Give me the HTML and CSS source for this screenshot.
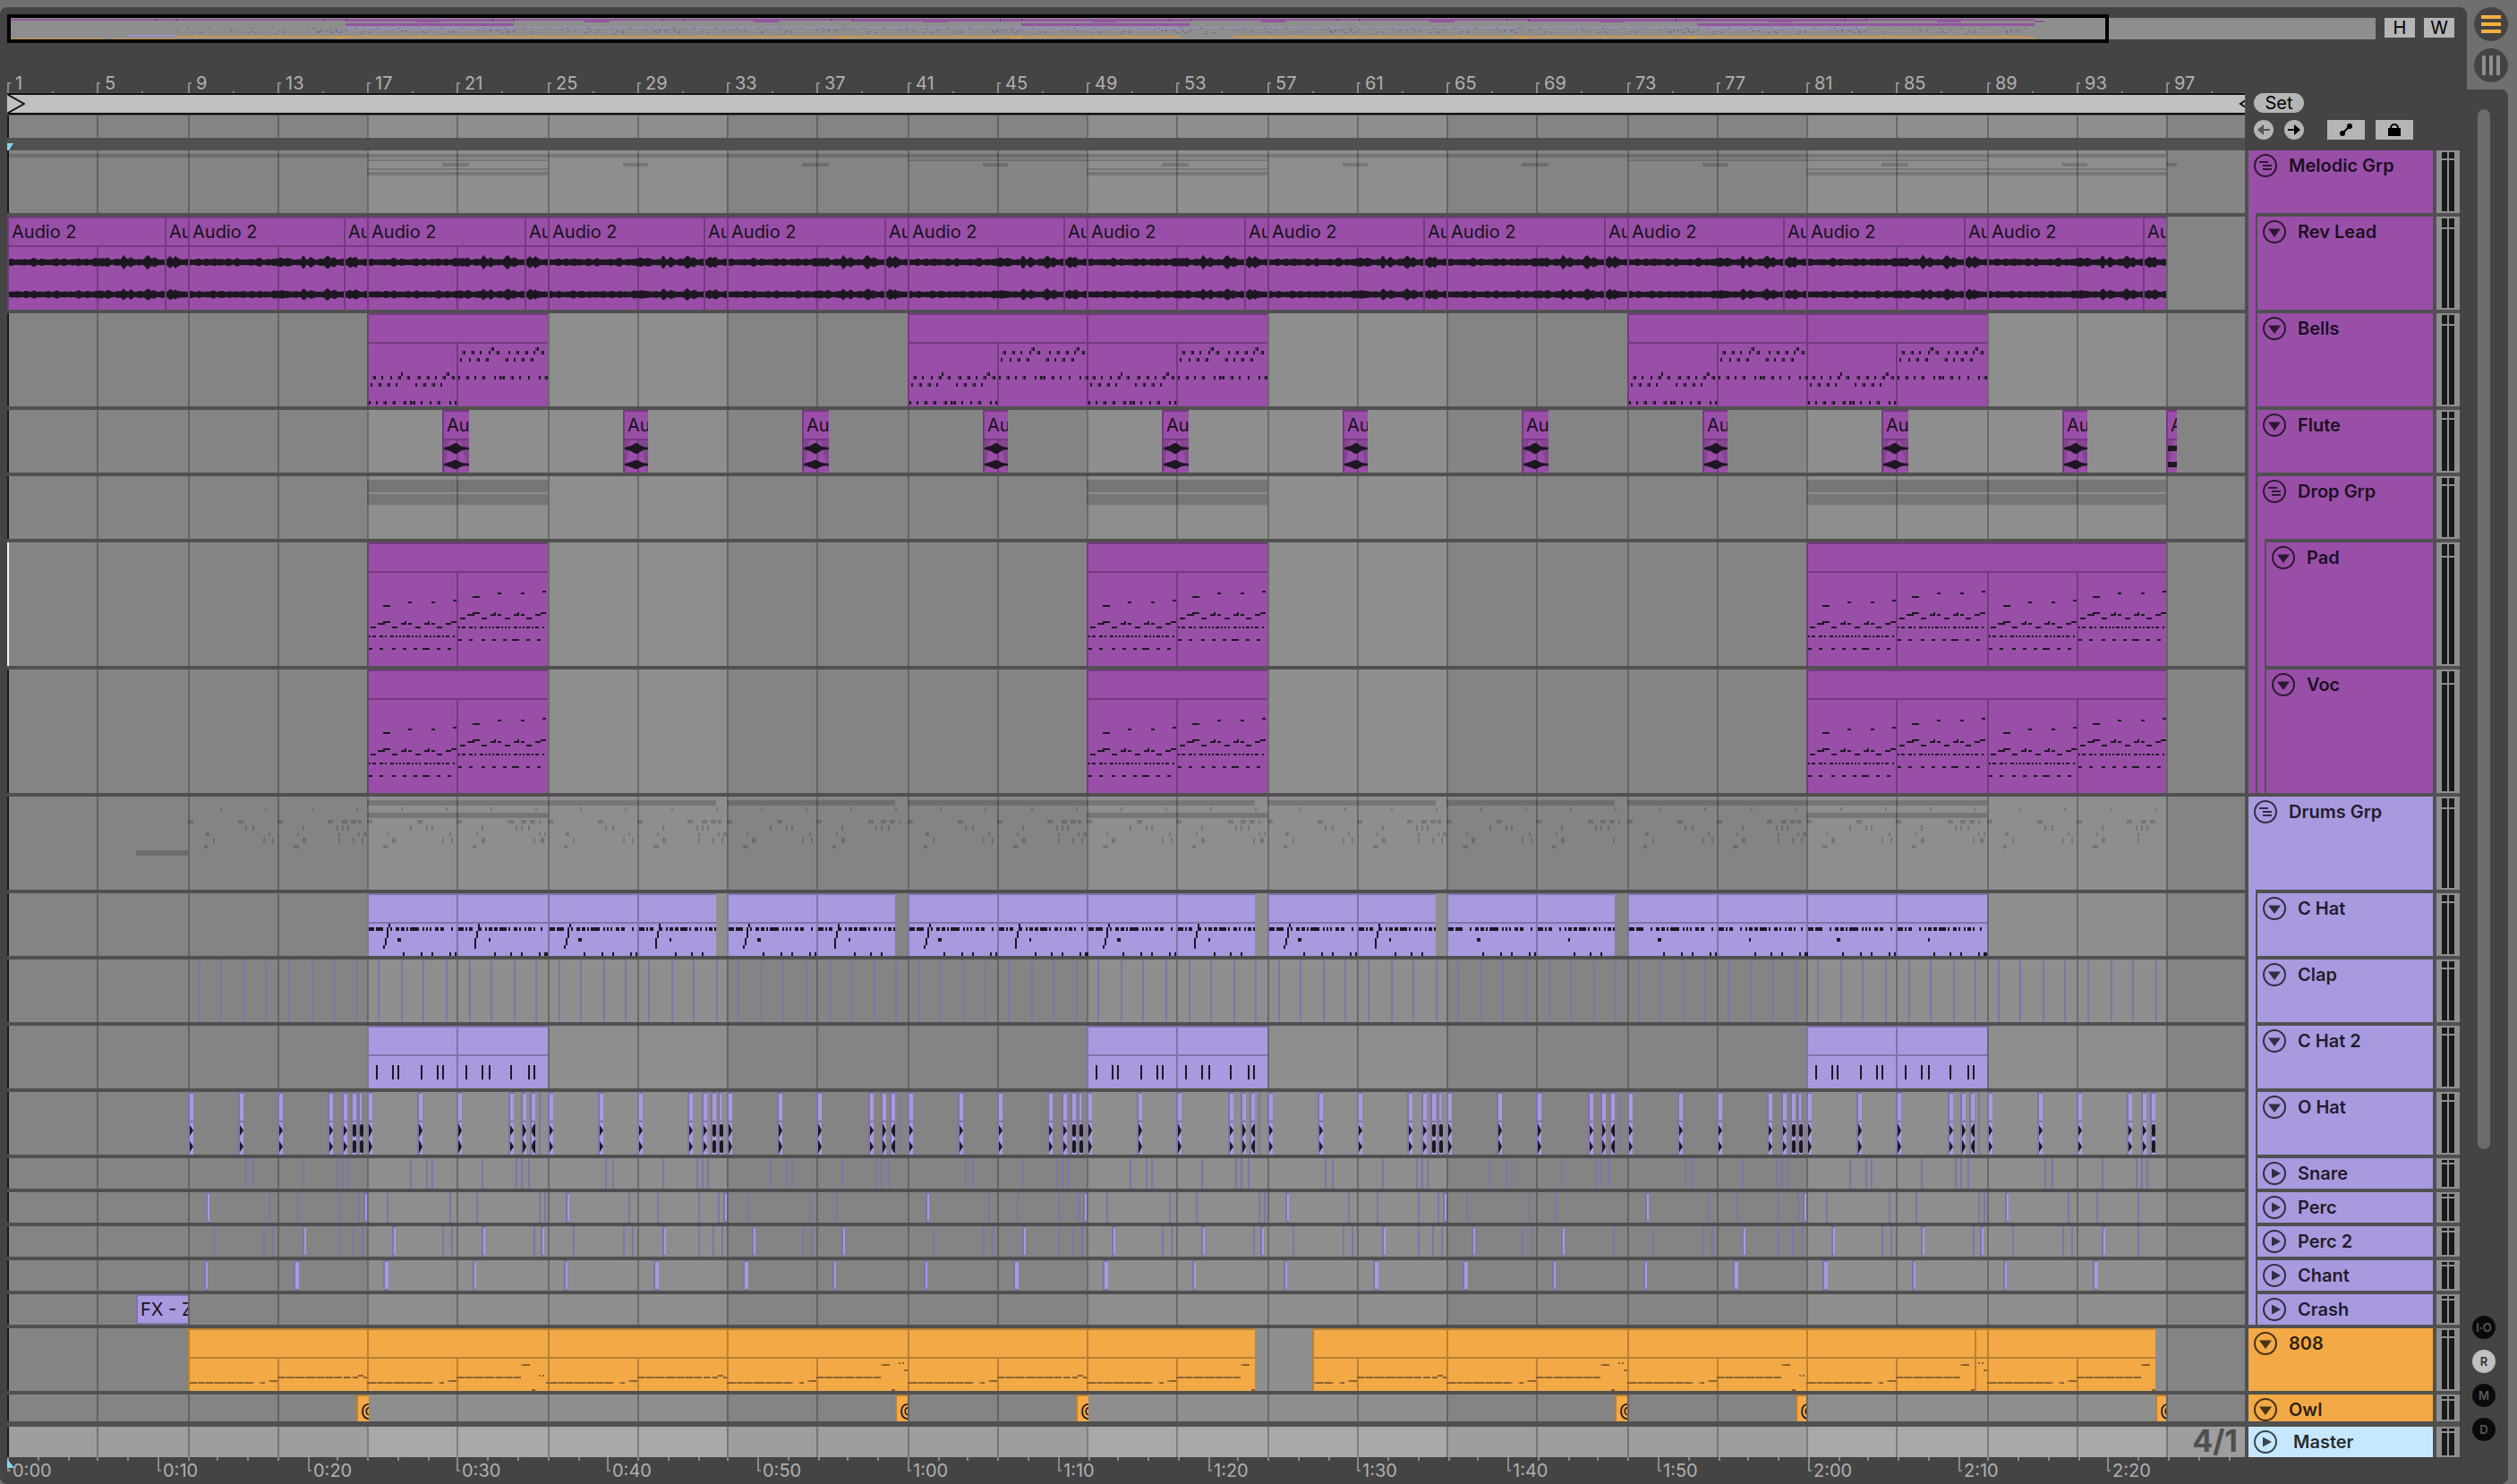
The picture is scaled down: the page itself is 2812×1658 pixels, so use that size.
FILE: index.html
```html
<!DOCTYPE html>
<html lang="en">

<head>
    <meta charset="utf-8">
    <title>Arrangement</title>
    <link rel="stylesheet" href="styles.css">
</head>

<body>
    <svg class="symbols" aria-hidden="true">
        <symbol id="icon-open" viewBox="0 0 26 26">
            <circle cx="13" cy="13" r="12" fill="none" stroke="currentColor" stroke-width="2" />
            <path d="M6 9.500H20L13 19z" fill="currentColor" />
        </symbol>
        <symbol id="icon-closed" viewBox="0 0 26 26">
            <circle cx="13" cy="13" r="12" fill="none" stroke="currentColor" stroke-width="2" />
            <path d="M10 7.500L20 13L10 18.500z" fill="currentColor" />
        </symbol>
        <symbol id="icon-group" viewBox="0 0 26 26">
            <circle cx="13" cy="13" r="12" fill="none" stroke="currentColor" stroke-width="2" />
            <path d="M6 9H16M10 13H20M10 17H20" fill="none" stroke="currentColor" stroke-width="2" />
        </symbol>
    </svg>

    <div class="workspace">
        <main class="panel">
            <div class="overview-bar">
                <div class="overview" data-overview></div>
                <button class="small-button">H</button>
                <button class="small-button">W</button>
            </div>

            <div class="columns top">
                <div>
                    <div class="bar-ruler" data-barruler></div>
                    <div class="loop-bar">
                        <svg width="20" height="20" viewBox="0 0 20 20"><path d="M1 0L19 10L1 20" fill="none" stroke="#111" stroke-width="2" /></svg>
                        <svg width="7" height="8" viewBox="0 0 7 8"><path d="M8 0L2 4L8 8" fill="none" stroke="#111" stroke-width="2" /></svg>
                    </div>
                    <div class="scrub" data-lane="scrub"></div>
                    <div class="locators">
                        <svg width="8" height="8" viewBox="0 0 8 8"><path d="M0 0H7L2 8H0z" fill="#7fd9f5" /></svg>
                    </div>
                </div>
                <div class="controls">
                    <button class="set-button">Set</button>
                    <div class="control-row">
                        <button class="round-button off" aria-label="Previous locator">
                            <svg width="22" height="22" viewBox="0 0 22 22"><path d="M11 5L4 11L11 17z" fill="currentColor" /><path d="M10 11H18" stroke="currentColor" stroke-width="2" /></svg>
                        </button>
                        <button class="round-button" aria-label="Next locator">
                            <svg width="22" height="22" viewBox="0 0 22 22"><path d="M11 5L18 11L11 17z" fill="currentColor" /><path d="M4 11H12" stroke="currentColor" stroke-width="2" /></svg>
                        </button>
                        <button class="wide-button" aria-label="Automation mode">
                            <svg width="14" height="14" viewBox="0 0 14 14"><path d="M3 11L5 9L9 5L11 3" stroke="#000" stroke-width="2" /><circle cx="3" cy="11" r="3" /><circle cx="11" cy="3" r="3" /></svg>
                        </button>
                        <button class="wide-button" aria-label="Lock envelopes">
                            <svg width="14" height="14" viewBox="0 0 14 14"><path d="M0 5H14V14H0z" /><path d="M3 6V5A4 4 0 0 1 11 5V6" fill="none" stroke="#000" stroke-width="2" /></svg>
                        </button>
                    </div>
                </div>
            </div>

            <div class="columns tracks">
                <div class="stack lanes">
                    <div class="lane m" data-lane="melodic"></div>
                    <div class="lane l" data-lane="rev"></div>
                    <div class="lane l" data-lane="bells"></div>
                    <div class="lane m" data-lane="flute"></div>
                    <div class="lane m" data-lane="drop"></div>
                    <div class="lane xl selected" data-lane="pad"></div>
                    <div class="lane xl" data-lane="voc"></div>
                    <div class="lane l" data-lane="drums"></div>
                    <div class="lane m" data-lane="chat"></div>
                    <div class="lane m" data-lane="clap"></div>
                    <div class="lane m" data-lane="chat2"></div>
                    <div class="lane m" data-lane="ohat"></div>
                    <div class="lane s" data-lane="snare"></div>
                    <div class="lane s" data-lane="perc"></div>
                    <div class="lane s" data-lane="perc2"></div>
                    <div class="lane s" data-lane="chant"></div>
                    <div class="lane s" data-lane="crash"></div>
                    <div class="lane m" data-lane="bass"></div>
                    <div class="lane xs" data-lane="owl"></div>
                    <div class="lane s master-lane" data-lane="master"><span class="grid-size">4/1</span></div>
                </div>

                <div class="stack headers">
                    <div class="group purple">
                        <div class="head m"><button class="fold" aria-label="Fold"><svg><use href="#icon-group" /></svg></button><span>Melodic Grp</span></div>
                        <div class="children">
                            <div class="head l purple"><button class="fold" aria-label="Fold"><svg><use href="#icon-open" /></svg></button><span>Rev Lead</span></div>
                            <div class="head l purple"><button class="fold" aria-label="Fold"><svg><use href="#icon-open" /></svg></button><span>Bells</span></div>
                            <div class="head m purple"><button class="fold" aria-label="Fold"><svg><use href="#icon-open" /></svg></button><span>Flute</span></div>
                            <div class="group purple">
                                <div class="head m"><button class="fold" aria-label="Fold"><svg><use href="#icon-group" /></svg></button><span>Drop Grp</span></div>
                                <div class="children">
                                    <div class="head xl purple"><button class="fold" aria-label="Fold"><svg><use href="#icon-open" /></svg></button><span>Pad</span></div>
                                    <div class="head xl purple"><button class="fold" aria-label="Fold"><svg><use href="#icon-open" /></svg></button><span>Voc</span></div>
                                </div>
                            </div>
                        </div>
                    </div>
                    <div class="group lavender">
                        <div class="head l"><button class="fold" aria-label="Fold"><svg><use href="#icon-group" /></svg></button><span>Drums Grp</span></div>
                        <div class="children">
                            <div class="head m lavender"><button class="fold" aria-label="Fold"><svg><use href="#icon-open" /></svg></button><span>C Hat</span></div>
                            <div class="head m lavender"><button class="fold" aria-label="Fold"><svg><use href="#icon-open" /></svg></button><span>Clap</span></div>
                            <div class="head m lavender"><button class="fold" aria-label="Fold"><svg><use href="#icon-open" /></svg></button><span>C Hat 2</span></div>
                            <div class="head m lavender"><button class="fold" aria-label="Fold"><svg><use href="#icon-open" /></svg></button><span>O Hat</span></div>
                            <div class="head s lavender"><button class="fold" aria-label="Unfold"><svg><use href="#icon-closed" /></svg></button><span>Snare</span></div>
                            <div class="head s lavender"><button class="fold" aria-label="Unfold"><svg><use href="#icon-closed" /></svg></button><span>Perc</span></div>
                            <div class="head s lavender"><button class="fold" aria-label="Unfold"><svg><use href="#icon-closed" /></svg></button><span>Perc 2</span></div>
                            <div class="head s lavender"><button class="fold" aria-label="Unfold"><svg><use href="#icon-closed" /></svg></button><span>Chant</span></div>
                            <div class="head s lavender"><button class="fold" aria-label="Unfold"><svg><use href="#icon-closed" /></svg></button><span>Crash</span></div>
                        </div>
                    </div>
                    <div class="head m orange"><button class="fold" aria-label="Fold"><svg><use href="#icon-open" /></svg></button><span>808</span></div>
                    <div class="head xs orange"><button class="fold" aria-label="Fold"><svg><use href="#icon-open" /></svg></button><span>Owl</span></div>
                    <div class="head s master"><button class="fold" aria-label="Unfold"><svg><use href="#icon-closed" /></svg></button><span>Master</span></div>
                </div>

                <div class="stack meters" data-meters></div>
            </div>

            <div class="columns">
                <div class="time-ruler" data-timeruler></div>
            </div>
        </main>

        <aside class="rail">
            <div class="modes">
                <button class="mode" aria-label="Arrangement">
                    <svg width="38" height="38" viewBox="0 0 38 38"><path d="M8 11H30M8 19H30M8 27H30" stroke="#f5b13d" stroke-width="4" /></svg>
                </button>
                <button class="mode" aria-label="Session">
                    <svg width="38" height="38" viewBox="0 0 38 38"><path d="M11 8V30M19 8V30M27 8V30" stroke="#8f8f8f" stroke-width="4" /></svg>
                </button>
            </div>
            <div class="scroller">
                <div class="thumb"></div>
                <div class="toggles">
                    <button class="toggle">I·O</button>
                    <button class="toggle on">R</button>
                    <button class="toggle">M</button>
                    <button class="toggle">D</button>
                </div>
            </div>
        </aside>
    </div>

    <script src="script.js"></script>
</body>

</html>
```

FILE: styles.css
```css
* {
    box-sizing: border-box;
}

body {
    margin: 0;
    min-height: 100vh;
    display: flex;
    background: #6f6f6f;
    font-family: Inter, "Liberation Sans", sans-serif;
    font-size: 20px;
    line-height: 20px;
}

button {
    margin: 0;
    padding: 0;
    border: 0;
    font: inherit;
    color: #000;
    background: #b5b5b5;
}

svg {
    display: block;
}

.symbols {
    display: none;
}

.workspace {
    flex: 1;
    display: flex;
    padding-top: 8px;
}

.panel {
    flex: 1;
    min-width: 0;
    padding: 8px 0 0 8px;
    background: #444;
    border-radius: 8px 8px 0 8px;
}

/* overview */

.overview-bar {
    display: flex;
    align-items: center;
    gap: 10px;
    height: 32px;
    padding-right: 14px;
}

.overview {
    flex: 1;
    min-width: 0;
    height: 32px;
}

.small-button {
    width: 34px;
    height: 22px;
    margin-bottom: 2px;
}

/* shared column layout */

.columns {
    display: grid;
    grid-template-columns: minmax(0, 1fr) 206px 26px;
    column-gap: 4px;
    margin-right: 8px;
}

.bar-ruler,
.time-ruler {
    position: relative;
    color: #b0b0b0;
}

.bar-ruler {
    height: 56px;
}

.time-ruler {
    height: 30px;
}

.bar-number,
.time-number {
    position: absolute;
}

.bar-number {
    bottom: 1px;
    padding-left: 9px;
}

.time-number {
    top: 5px;
    padding-left: 6px;
}

.loop-bar {
    display: flex;
    justify-content: space-between;
    align-items: center;
    height: 24px;
    border-top: 2px solid #111;
    border-bottom: 2px solid #111;
    background: #c0c0c0;
    outline: 1px solid #505050;
}

.scrub {
    height: 26px;
}

.locators {
    height: 14px;
    padding-top: 6px;
    background: #505050;
}

.controls {
    display: flex;
    flex-direction: column;
    align-items: flex-start;
    gap: 8px;
    padding: 56px 0 0 6px;
}

.set-button {
    width: 56px;
    height: 22px;
    border-radius: 11px;
}

.control-row {
    display: flex;
    gap: 12px;
}

.round-button {
    width: 22px;
    height: 22px;
    border-radius: 50%;
}

.round-button.off {
    color: #555;
}

.wide-button {
    display: flex;
    justify-content: center;
    align-items: center;
    width: 42px;
    height: 22px;
}

.round-button + .wide-button {
    margin-left: 14px;
}

/* tracks */

.tracks {
    background: #505050;
}

.stack {
    display: flex;
    flex-direction: column;
    gap: 4px;
}

.s {
    height: 34px;
}

.xs {
    height: 30px;
    margin-bottom: 2px;
}

.m {
    height: 70px;
}

.l {
    height: 104px;
}

.xl {
    height: 138px;
}

.lane {
    position: relative;
    overflow: hidden;
}

.clip-name {
    position: absolute;
    top: 2px;
    height: 30px;
    padding-left: 5px;
    overflow: hidden;
    line-height: 30px;
    white-space: nowrap;
    color: #17121b;
}

.grid-size {
    position: absolute;
    right: 8px;
    top: 0;
    font-size: 34px;
    font-weight: 700;
    line-height: 32px;
    color: #4f4f4f;
}

.purple {
    background: #994fa8;
}

.lavender {
    background: #a999df;
}

.orange {
    background: #f2a946;
}

.children {
    display: flex;
    flex-direction: column;
    gap: 4px;
    margin-left: 8px;
    padding: 4px 0 0 2px;
    background: #505050;
}

.head {
    display: flex;
    align-items: flex-start;
    gap: 13px;
    padding: 4px 0 0 6px;
    font-weight: 600;
    line-height: 26px;
    color: rgba(0, 0, 0, 0.82);
    overflow: hidden;
}

.head.master {
    gap: 18px;
    background: #c6e8ff;
}

.fold {
    width: 26px;
    height: 26px;
    background: none;
    color: rgba(0, 0, 0, 0.7);
}

.fold svg {
    width: 26px;
    height: 26px;
}

.meter {
    display: grid;
    grid-template-columns: 6px 6px;
    grid-template-rows: 10% 1fr;
    gap: 2px;
    padding: 2px 6px;
    background: #8e8e8e;
}

.meter i {
    background: #191919;
}

/* right rail */

.rail {
    display: flex;
    flex-direction: column;
    width: 56px;
}

.modes {
    display: flex;
    flex-direction: column;
    gap: 8px;
    height: 92px;
    padding-left: 8px;
}

.mode {
    width: 38px;
    height: 38px;
    border-radius: 50%;
    background: #444;
}

.scroller {
    flex: 1;
    display: flex;
    flex-direction: column;
    width: 46px;
    padding: 22px 14px 48px 12px;
    background: #444;
    border-radius: 0 8px 8px 0;
}

.thumb {
    flex: 1;
    width: 14px;
    border-radius: 7px;
    background: #6b6b6b;
}

.toggles {
    display: flex;
    flex-direction: column;
    align-items: center;
    gap: 12px;
    width: 14px;
    margin-top: 186px;
}

.toggle {
    width: 26px;
    height: 26px;
    border-radius: 50%;
    background: #0a0a0a;
    color: #5a5a5a;
    font-size: 13px;
    font-weight: 600;
}

.toggle.on {
    background: #c0c0c0;
    color: #333;
}
```

FILE: script.js
```js
const BARS = 99.5; // bars visible in the window
const UNIT = 25.125; // clip data below is written in units of 1/25.125 bar
const NOTE = "#1d1722";

const colors = {
    purple: ["#994fa8", "#743a80"],
    lavender: ["#a999df", "#8173a8"],
    orange: ["#f2a946", "#b78035"]
};

let width = document.querySelector(".lanes").clientWidth;
const snap = v => Math.round(v / 2) * 2;
const barX = bar => snap((bar - 1) * width / BARS);
const unitX = (bar, u) => snap(((bar - 1) + u / UNIT) * width / BARS);
const rect = (x, y, w, h) => `M${x} ${y}h${w}v${h}h${-w}z`;
const path = (d, fill) => `<path d="${d}" fill="${fill}"/>`;

function svg(w, h, content) {
    return `<svg width="${w}" height="${h}" shape-rendering="crispEdges">${content}</svg>`;
}

// every eighth bar a block starts, blocks alternate between A and B
const blocks = [];
for (let bar = 9, i = 0; bar < 97; bar += 8, i++) {
    blocks.push({ bar: bar, odd: i % 2 == 1 });
}

function hits(a, b, shorter) {
    let list = [];
    blocks.forEach(block => {
        let pattern = block.odd ? b : a;
        if (block.odd && shorter && shorter[block.bar]) pattern = pattern.slice(0, shorter[block.bar]);
        pattern.forEach(p => {
            if (block.bar == 89 && p[0] > 182) return;
            list.push([block.bar, p[0], p[1] || 2, p[2]]);
        });
    });
    return list;
}

const ohat = hits(
    [[0, 6], [56, 6], [100, 6], [156, 6], [172, 6], [182, 6, "block"], [190, 4, "block"]],
    [[0, 6, "big"], [56, 6, "big"], [100, 6, "big"], [158, 6], [172, 6, "big"], [182, 6, "left"], [192, 2, "none"]]);
const snare = hits(
    [[64], [72], [128], [166], [172], [178]],
    [[48], [66], [72], [128], [166], [172], [180]]);
const perc = hits(
    [[20, 4], [90], [122], [168], [190], [196, 4]],
    [[22], [92], [122], [192], [198]], { 33: 3, 65: 3 });
const perc2 = hits(
    [[28], [84], [94], [128, 4], [168], [184], [194]],
    [[28, 4], [84], [94], [128, 4], [186], [194, 4]], { 33: 4, 65: 5 });
const clap = [];
for (let i = 0; i < 88; i++) clap.push([9.5 + i, 0, 2]);
const chant = [];
for (let i = 0; i < 22; i++) chant.push([9 + 4 * i, 18.4, [4, 6, 6, 4][i % 4]]);

const padRanges = [[17, 25], [49, 57], [81, 97]];
const bellRanges = [[17, 25], [41, 57], [73, 89]];
const chatRanges = [[17, 32.5], [33, 40.5], [41, 56.5], [57, 64.5], [65, 72.5], [73, 89]];
const chat2Ranges = [[17, 25], [49, 57], [81, 89]];
const bassRanges = [[9, 56.5], [59.04, 96.5]];
const flute = [];
for (let bar = 20.35; bar < 93; bar += 8) flute.push([bar, bar + 1.17]);
flute.push([97, 97.45]);
const crash = [[6.75, 9]];
const owl = [[16.55, 17.05], [40.52, 41], [48.55, 49.05], [72.5, 73], [80.55, 81], [96.55, 97]];

function background(h, light, dark) {
    let out = path(rect(0, 0, width, h), dark);
    let bands = "";
    [17, 49, 81].forEach(bar => bands += rect(barX(bar), 0, barX(bar + 16) - barX(bar), h));
    out += path(bands, light);
    let lines = "";
    for (let bar = 1; bar < BARS + 1; bar += 4) lines += rect(barX(bar), 0, 2, h);
    return out + path(lines, "rgba(0,0,0,.25)") + path(rect(0, 0, 2, h), "#1a1a1a");
}

function clips(ranges, h, color, splits) {
    let fill = "", edge = "";
    ranges.forEach(range => {
        let x = barX(range[0]), end = barX(range[1]);
        fill += rect(x, 0, end - x, h);
        edge += rect(x, 0, end - x, 2) + rect(x, 0, 2, h);
        if (h > 34) edge += rect(x, 32, end - x, 2);
        else edge += rect(x, h - 2, end - x, 2);
        for (let bar = 1; bar < 100; bar += 4) {
            if (bar <= range[0] || bar >= range[1] || h <= 34) continue;
            let whole = splits && (bar - 1) % splits == 0;
            edge += whole ? rect(barX(bar), 0, 2, h) : rect(barX(bar), 32, 2, h - 32);
        }
    });
    return path(fill, colors[color][0]) + path(edge, colors[color][1]);
}

function hitClips(list, h) {
    let fill = "", edge = "";
    list.forEach(([bar, u, w]) => {
        let x = unitX(bar, u);
        edge += rect(x, 0, w, h);
        if (w > 2) fill += rect(x + 2, 2, w - 2, h - 4);
    });
    return path(edge, colors.lavender[1]) + path(fill, colors.lavender[0]);
}

// notes: [y, height, [x, width, x, width ...]] drawn from one bar, cut at the clip end
function notes(bar, end, rows, start) {
    let d = "", last = barX(end), first = start ? barX(start) + 2 : 0;
    rows.forEach(([y, h, xs]) => {
        for (let i = 0; i < xs.length; i += 2) {
            let x = unitX(bar, xs[i]), w = xs[i + 1];
            if (x < first) { w -= first - x; x = first; }
            if (x + w > last) w = last - x;
            if (w > 0) d += rect(x, y, w, h);
        }
    });
    return d;
}

const bellLow = [
    [66, 4, [38, 2, 90, 2]],
    [70, 4, [8, 2, 16, 2, 26, 2, 36, 2, 46, 2, 58, 2, 68, 2, 76, 2, 86, 2, 96, 2]],
    [78, 4, [4, 2, 14, 2, 24, 2, 32, 2, 54, 2, 64, 2, 74, 2, 82, 2]],
    [98, 4, [2, 2, 10, 2, 20, 2, 30, 2, 42, 2, 48, 2, 52, 2, 60, 2, 70, 2, 80, 2, 92, 2, 98, 2]]
];
const bellHigh = [
    [38, 4, [40, 2, 90, 2]],
    [42, 4, [8, 2, 18, 2, 26, 2, 36, 2, 46, 2, 58, 2, 68, 2, 78, 2, 86, 2, 96, 2]],
    [50, 4, [4, 2, 14, 2, 24, 2, 34, 2, 56, 2, 64, 2, 74, 2, 84, 2]],
    [70, 4, [2, 2, 12, 2, 20, 2, 30, 2, 42, 2, 48, 2, 52, 2, 62, 2, 70, 2, 80, 2, 92, 2, 100, 2]]
];
// lighter first half of the wider bell notes
const bellLowSoft = [
    [66, 4, [88, 2]],
    [70, 4, [6, 2, 34, 2, 44, 2, 56, 2, 66, 2, 84, 2, 94, 2]],
    [78, 4, [12, 2, 22, 2, 62, 2, 72, 2]],
    [98, 4, [18, 2, 28, 2, 40, 2, 50, 2, 78, 2]]
];
const bellHighSoft = [
    [38, 4, [38, 2, 88, 2]],
    [42, 4, [6, 2, 16, 2, 44, 2, 66, 2, 76, 2, 94, 2]],
    [50, 4, [22, 2, 32, 2, 54, 2, 72, 2, 82, 2]],
    [70, 4, [10, 2, 28, 2, 50, 2, 60, 2, 98, 2]]
];
const padLow = [
    [70, 2, [18, 8]],
    [66, 2, [46, 4, 72, 4]],
    [64, 2, [96, 4]],
    [90, 2, [12, 8, 38, 6, 46, 4, 64, 6, 72, 4, 88, 6]],
    [88, 2, [18, 8, 42, 2, 68, 2, 94, 6]],
    [94, 2, [4, 6, 28, 6, 54, 6, 78, 6]],
    [104, 2, [2, 2, 6, 4, 14, 4, 20, 2, 26, 4, 32, 2, 36, 2, 40, 2, 44, 4, 50, 2, 54, 2, 58, 2, 64, 4, 70, 2, 74, 2, 78, 4, 84, 2, 88, 4, 96, 2]],
    [118, 2, [2, 4, 14, 4, 28, 4, 40, 4, 52, 4, 62, 8, 78, 4, 90, 4]]
];
const padHigh = padLow.map(([y, h, xs]) => [y - 10, h, xs]);

const hatA = [
    [38, 4, [2, 6, 10, 8, 26, 2, 32, 4, 38, 4, 44, 2, 48, 10, 62, 2, 66, 2, 70, 2, 76, 4, 82, 4, 94, 2]],
    [50, 4, [34, 4]],
    [66, 4, [40, 2, 60, 2, 72, 2, 92, 2, 98, 2]]
];
const hatB = [
    [38, 4, [2, 6, 10, 2, 14, 4, 26, 2, 32, 2, 36, 4, 42, 4, 48, 8, 58, 2, 64, 4, 70, 2, 76, 2, 80, 4, 86, 2, 94, 2]],
    [50, 4, [36, 2]],
    [66, 4, [42, 2, 60, 2, 72, 2, 92, 2, 98, 4]]
];
const rollA = [[34, 4, [24, 2]], [38, 12, [22, 2]], [50, 8, [20, 2]], [58, 4, [18, 2]]];
const rollB = [[34, 8, [24, 2]], [42, 8, [22, 2]], [50, 12, [20, 2]]];

const bassEnd1 = [[52, 2, [90, 6]], [54, 2, [96, 4]]];
const bassLow = [[60, 2, [0, 10, 12, 6, 20, 8, 30, 12, 44, 8, 54, 8, 64, 8, 82, 4]], [58, 2, [92, 8]]];
const bassHigh = [[54, 2, [0, 8, 10, 8, 20, 10, 32, 10, 44, 8, 54, 8, 64, 8]]];
const bassFlat = [[54, 2, [74, 8, 84, 6]]].concat(bassEnd1);
const bassTurn = [[40, 2, [74, 8]], [68, 2, [84, 4]], [52, 2, [92, 2, 96, 2]], [60, 2, [100, 2]]];
const bassJump = [[40, 2, [74, 8]], [68, 2, [84, 4]], [38, 2, [92, 2, 96, 2]], [46, 2, [98, 4]]];
const bassTails = {
    13: bassFlat, 21: bassTurn, 29: bassFlat, 37: bassJump, 45: bassFlat, 53: bassJump,
    61: bassFlat, 69: bassJump, 77: bassTurn, 85: bassJump, 93: bassJump
};

// one 8 bar take of the lead, level per position
function level(u, channel) {
    let v = 2.8 + Math.abs(Math.sin(u * 1.3 + channel) * Math.sin(u * .37)) * 1.4;
    [[30, 1, 4], [56, 1, 3], [80, 1, 4], [103, 1.5, 9], [112, 2, 3], [130, 5, 3], [138, 3, 3], [157, 4.5, 5], [164, 2.5, 3], [182, 3, 4], [188, 4, 3]].forEach(p => {
        v += Math.max(0, p[1] * (channel ? .7 : 1) * (1 - Math.abs(u - p[0]) / p[2]));
    });
    return v;
}

function wave(center, channel) {
    let top = "", bottom = "";
    let end = barX(97), block = 8 * width / BARS;
    for (let x = 2; x <= end; x += 2) {
        let v = level((x % block) / block * 201, channel);
        top += `L${x} ${(center - v).toFixed(1)}`;
        bottom = `L${x} ${(center + v).toFixed(1)}` + bottom;
    }
    return `<path d="M2 ${center}${top}${bottom}z" fill="${NOTE}" shape-rendering="auto"/>`;
}

function shape(x, cy, r, kind) {
    if (kind == "none") return "";
    if (kind == "block") return `M${x} ${cy - r + 2}l1 -2h2l1 2v${2 * r - 4}l-1 2h-2l-1 -2z`;
    if (kind == "left") return `M${x + 4} ${cy - r}v${2 * r}q-8 ${-r} 0 ${-2 * r}z`;
    return `M${x} ${cy - r}l2 ${r / 2}l2 ${r / 2}l-2 ${r / 2}l-2 ${r / 2}z`;
}

function shadow(ranges, y, h) {
    return ranges.map(r => rect(barX(r[0]), y, barX(r[1]) - barX(r[0]), h)).join("");
}

function hitShadow(list, y, h) {
    return list.map(([bar, u, w]) => rect(unitX(bar, u), y, w, h)).join("");
}

function each4(ranges, callback) {
    let out = "";
    ranges.forEach(([from, to]) => {
        for (let bar = Math.floor((from - 1) / 4) * 4 + 1; bar < to; bar += 4) out += callback(bar, to, from);
    });
    return out;
}

const isLow = bar => (bar - 1) % 8 == 0;
const grey = "rgba(0,0,0,.17)";

const lanes = {
    scrub: () => "",
    master: () => "",
    melodic: () => path(shadow([[1, 97]], 4, 4) + shadow(bellRanges, 10, 2) + shadow(flute, 14, 4) +
        shadow(padRanges, 20, 2) + shadow(padRanges, 24, 4), grey),
    drop: () => path(shadow(padRanges, 4, 14) + shadow(padRanges, 20, 12), grey),
    drums: () => path(shadow(chatRanges, 4, 6) + hitShadow(clap.filter((c, i) => i % 2), 12, 4) +
        shadow(chat2Ranges, 18, 6) + hitShadow(ohat, 26, 4) + hitShadow(snare, 32, 6) +
        hitShadow(perc, 40, 4) + hitShadow(perc2, 46, 6) + hitShadow(chant, 54, 4) + shadow(crash, 60, 6), grey),
    rev: h => {
        let parts = [];
        for (let bar = 1; bar < 97; bar += 8) parts.push([bar, bar + 7], [bar + 7, bar + 8]);
        let out = clips(parts, h, "purple");
        let cuts = parts.map(p => rect(barX(p[0]), 34, 2, h)).join("");
        return out + wave(51, 0) + wave(87, 1) + path(cuts, colors.purple[1]);
    },
    bells: h => clips(bellRanges, h, "purple", 8) +
        path(each4(bellRanges, (bar, to) => notes(bar, to, isLow(bar) ? bellLowSoft : bellHighSoft)), "#5b3065") +
        path(each4(bellRanges, (bar, to) => notes(bar, to, isLow(bar) ? bellLow : bellHigh)), NOTE),
    flute: h => {
        let fades = "", d = "";
        flute.forEach(r => {
            let x = barX(r[0]) + 2, end = barX(r[1]);
            fades += `M${x} 34h${Math.min(6, end - x)}L${x} ${h}z`;
            if (end - x > 20) fades += `M${end} 34h-10L${end} ${h}z`;
            [43, 61].forEach((y, i) => {
                let r = 6 - i;
                d += end - x > 20
                    ? `M${x} ${y - 1}L${x + 7} ${y - 3}L${x + 12} ${y - r}H${x + 14}L${x + 20} ${y - 2}L${end} ${y - 1}V${y + 1}L${x + 20} ${y + 2}L${x + 14} ${y + r}H${x + 12}L${x + 7} ${y + 3}L${x} ${y + 1}z`
                    : rect(x, y - 3, end - x, 6);
            });
        });
        return clips(flute, h, "purple") + path(fades, "#84468f") +
            `<path d="${d}" fill="${NOTE}" shape-rendering="auto"/>`;
    },
    pad: h => clips(padRanges, h, "purple") +
        path(each4(padRanges, (bar, to) => notes(bar, to, isLow(bar) ? padLow : padHigh)), NOTE),
    chat: h => clips(chatRanges, h, "lavender", 4) +
        path(each4(chatRanges, (bar, to) => notes(bar, to, isLow(bar) ? hatA : hatB) +
            (bar < 65 ? notes(bar, to, isLow(bar) ? rollA : rollB) : "")), NOTE),
    clap: h => hitClips(clap, h),
    chat2: h => clips(chat2Ranges, h, "lavender", 4) +
        path(each4(chat2Ranges, (bar, to) => notes(bar, to, [[44, 16, isLow(bar)
            ? [10, 2, 28, 2, 34, 2, 60, 2, 78, 2, 84, 2]
            : [10, 2, 28, 2, 36, 2, 60, 2, 80, 2, 86, 2]]])), NOTE),
    ohat: h => {
        let fill = "", edge = "", d = "";
        ohat.forEach(([bar, u, w, kind]) => {
            let x = unitX(bar, u);
            fill += rect(x, 0, w, h);
            edge += rect(x, 0, w, 2) + rect(x, 0, 2, h) + rect(x, 32, w, 2);
            let r = kind == "big" || kind == "left" ? 8 : kind == "block" ? 7 : 6;
            d += shape(x + 2, 43, r, kind) + shape(x + 2, 61, r, kind);
        });
        return path(fill, colors.lavender[0]) + path(edge, colors.lavender[1]) +
            `<path d="${d}" fill="${NOTE}" shape-rendering="auto"/>`;
    },
    snare: h => hitClips(snare, h),
    perc: h => hitClips(perc, h),
    perc2: h => hitClips(perc2, h),
    chant: h => hitClips(chant, h),
    crash: h => clips(crash, h, "lavender"),
    bass: h => {
        let line = each4(bassRanges, (bar, to, from) => {
            let rows = isLow(bar) ? bassLow : bassHigh.concat(bassTails[bar] || []);
            return notes(bar, to, rows, from);
        });
        let soft = each4(bassRanges, (bar, to, from) => notes(bar, to, isLow(bar)
            ? [[60, 2, [0, 74, 80, 6]], [58, 2, [90, 10]]]
            : [[54, 2, [0, 72]], [40, 2, bassTails[bar] == bassFlat ? [] : [72, 10]]], from));
        return clips(bassRanges, h, "orange", 8) + path(rect(barX(88.5), 0, 2, h), colors.orange[1]) +
            path(soft, "#b98538") + path(line, "#8b6430");
    },
    owl: h => {
        let fill = shadow(owl, 0, h);
        let edge = shadow(owl, 0, 2) + owl.map(r => rect(barX(r[0]), 0, 2, h)).join("");
        return path(fill, colors.orange[0]) + path(edge, colors.orange[1]);
    }
};
lanes.voc = lanes.pad;

function label(lane, from, to, text) {
    let span = document.createElement("span");
    span.className = "clip-name";
    span.textContent = text;
    span.style.left = barX(from) + "px";
    span.style.width = barX(to) - barX(from) + "px";
    lane.appendChild(span);
}

function drawLanes() {
    document.querySelectorAll("[data-lane]").forEach(lane => {
        let name = lane.dataset.lane, h = lane.clientHeight;
        let back = name == "master" ? background(h, "#a9a9a9", "#9e9e9e") : background(h, "#8e8e8e", "#848484");
        lane.insertAdjacentHTML("afterbegin", svg(width, h, back + lanes[name](h) +
            (lane.classList.contains("selected") ? path(rect(0, 0, 2, h), "#f4f4f4") : "")));
        if (name == "rev") {
            for (let bar = 1; bar < 97; bar += 8) {
                label(lane, bar, bar + 7, "Audio 2");
                label(lane, bar + 7, bar + 8, "Au");
            }
        }
        if (name == "flute") flute.forEach((r, i) => label(lane, r[0], r[1], r[0] == 97 ? "A" : "Au"));
        if (name == "crash") label(lane, 6.75, 9, "FX - Z");
        if (name == "owl") owl.forEach(r => label(lane, r[0], r[1], "@"));
    });
}

function drawRulers() {
    let bars = document.querySelector("[data-barruler]");
    let d = "", html = "";
    for (let bar = 1; bar < BARS + 1; bar += 2) {
        if ((bar - 1) % 4 == 0) {
            d += rect(barX(bar), 44, 2, 12) + rect(barX(bar), 44, 4, 2);
            html += `<span class="bar-number" style="left:${barX(bar)}px">${bar}</span>`;
        } else d += rect(barX(bar), 54, 2, 2);
    }
    bars.innerHTML = svg(width, 56, path(d, "#8a8a8a")) + html;

    let times = document.querySelector("[data-timeruler]");
    d = "";
    html = "";
    let second = width * 0.0067056;
    for (let s = 0; s <= 148; s += 2) {
        let x = snap(s * second);
        if (s % 10 == 0) {
            d += rect(x, 0, 2, 16) + rect(x, 14, 4, 2);
            let text = Math.floor(s / 60) + ":" + String(s % 60).padStart(2, "0");
            html += `<span class="time-number" style="left:${x}px">${text}</span>`;
        } else d += rect(x, 0, 2, 4);
    }
    times.innerHTML = svg(width, 30, path(d, "#8a8a8a") +
        '<path d="M0 2L8 12H0z" fill="#7fd9f5" shape-rendering="auto"/>') + html;
}

function drawOverview() {
    let box = document.querySelector("[data-overview]");
    let full = box.clientWidth, view = full * 0.8874, k = view / BARS;
    const ox = bar => Math.round((bar - 1) * k);
    const strip = (ranges, y, h) => ranges.map(r => rect(ox(r[0]), y, ox(r[1]) - ox(r[0]), h)).join("");
    const dots = (list, y) => list.map(([bar, u]) => rect(ox(bar + u / UNIT), y, 2, 1)).join("");
    let ticks = "";
    for (let bar = 9; bar < 97; bar += 8) ticks += rect(ox(bar), 5, 1, 2) + rect(ox(bar) - 24, 5, 1, 2);
    let out = path(rect(0, 4, full, 24), "#8e8e8e") +
        path(strip([[1, 97]], 5, 2) + strip(bellRanges, 6, 2) + strip(flute, 7, 2) + strip(padRanges, 10, 3), "#9455a1") +
        path(ticks, "#5b2f66") +
        path(strip(chatRanges, 14, 1) + strip(chat2Ranges, 16, 1) + strip(crash, 23, 2), "#9d90c8") +
        path(dots(clap, 15) + dots(ohat, 17) + dots(snare, 18) + dots(perc, 19) + dots(perc2, 20) + dots(chant, 21), "#6a5f9c") +
        path(strip(bassRanges, 24, 2) + strip(owl, 25, 2) + strip([[1, 5.6], [6, 9]], 27, 1), "#cc9650");
    out += `<path d="M0 0H${view}V32H0zM4 4V28H${view - 4}V4z" fill="#000" fill-rule="evenodd"/>`;
    box.innerHTML = svg(full, 32, out);
}

function drawMeters() {
    let box = document.querySelector("[data-meters]");
    document.querySelectorAll(".lanes .lane").forEach(lane => {
        let size = lane.className.match(/\b(xs|s|m|l|xl)\b/)[0];
        box.insertAdjacentHTML("beforeend", `<div class="meter ${size}"><i></i><i></i><i></i><i></i></div>`);
    });
}

function draw() {
    width = document.querySelector(".lanes").clientWidth;
    document.querySelectorAll("[data-lane] > svg, .clip-name").forEach(el => el.remove());
    drawLanes();
    drawRulers();
    drawOverview();
}

drawMeters();
draw();
window.addEventListener("resize", draw);
```
